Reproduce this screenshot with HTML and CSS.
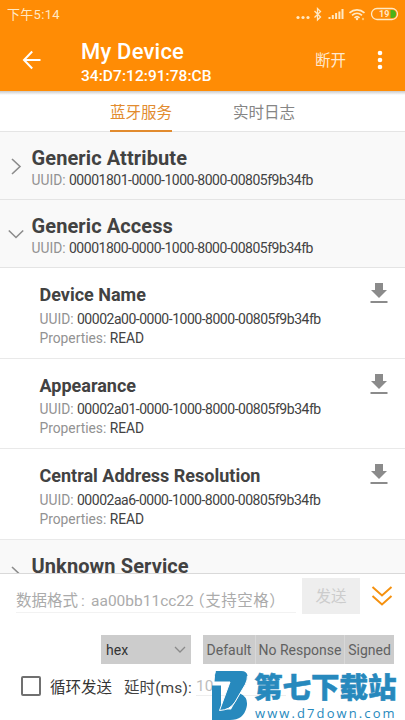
FILE: index.html
```html
<!DOCTYPE html>
<html lang="zh-CN">
<head>
<meta charset="utf-8">
<title>My Device</title>
<link rel="stylesheet" href="styles.css">
</head>
<body>
<div class="screen">
  <header class="header">
    <div class="status">
      <span class="clock">下午5:14</span>
      <svg class="status-icons" width="106" height="20" viewBox="0 0 106 20" fill="none" stroke="#ffe9c4" stroke-width="1.3">
        <g fill="#ffe9c4" stroke="none"><circle cx="3" cy="12.5" r="1.6"/><circle cx="8" cy="12.5" r="1.6"/><circle cx="13" cy="12.5" r="1.6"/></g>
        <path d="M19.5 6l6 6-3 3V3.500l3 3-6 6"/>
        <path d="M34.500 14v-2M37.800 14v-4M41.100 14V8M44.400 14V6.500M47.500 14V4" stroke-width="2"/>
        <path d="M54.500 7.800c4.500-4 10.500-4 15 0M57 10.400c3-2.700 7-2.700 10 0M59.500 12.800c1.500-1.500 3.500-1.500 5 0" stroke-width="1.7"/>
        <circle cx="62" cy="14" r="1.200" fill="#ffe9c4" stroke="none"/>
        <circle cx="68" cy="14" r="1.200" fill="#ffc56a" stroke="none"/>
        <rect x="76.500" y="3.500" width="26" height="11" rx="5.500"/>
        <path d="M95.500 5H97a4 4 0 010 8h-1.500z" fill="#4bb318" stroke="none"/>
        <text x="84" y="12.300" class="battery">19</text>
      </svg>
    </div>
    <div class="toolbar">
      <svg class="back" width="20" height="20" viewBox="0 0 20 20" fill="none" stroke="#fff" stroke-width="2"><path d="M10.200 1.500L2 10l8.200 8.500M2 10h16.500"/></svg>
      <div class="heading">
        <h1>My Device</h1>
        <p>34:D7:12:91:78:CB</p>
      </div>
      <span class="disconnect">断开</span>
      <svg class="more" width="6" height="20" viewBox="0 0 6 20" fill="#fff"><circle cx="3" cy="3" r="2.300"/><circle cx="3" cy="10" r="2.300"/><circle cx="3" cy="17" r="2.300"/></svg>
    </div>
  </header>
  <nav class="tabs">
    <span class="tab active">蓝牙服务</span>
    <span class="tab">实时日志</span>
  </nav>
  <main class="list">
    <section class="service">
      <svg class="chevron" width="16" height="18" viewBox="0 0 16 18"><path d="M4 2l8 7.500L4 17"/></svg>
      <div><h2>Generic Attribute</h2><p class="meta">UUID: <b class="uuid">00001801-0000-1000-8000-00805f9b34fb</b></p></div>
    </section>
    <section class="service">
      <svg class="chevron" width="16" height="18" viewBox="0 0 16 18"><path d="M.800 5.500L8 12.500l7.200-7"/></svg>
      <div><h2>Generic Access</h2><p class="meta">UUID: <b class="uuid">00001800-0000-1000-8000-00805f9b34fb</b></p></div>
    </section>
    <section class="item">
      <div><h3>Device Name</h3><p class="meta">UUID: <b class="uuid">00002a00-0000-1000-8000-00805f9b34fb</b></p><p class="meta">Properties: <b>READ</b></p></div>
      <svg class="download" width="18" height="22" viewBox="0 0 18 22"><path d="M5 1h8v7h4l-8 8-8-8h4zM.500 19h17v2H.500z"/></svg>
    </section>
    <section class="item">
      <div><h3>Appearance</h3><p class="meta">UUID: <b class="uuid">00002a01-0000-1000-8000-00805f9b34fb</b></p><p class="meta">Properties: <b>READ</b></p></div>
      <svg class="download" width="18" height="22" viewBox="0 0 18 22"><path d="M5 1h8v7h4l-8 8-8-8h4zM.500 19h17v2H.500z"/></svg>
    </section>
    <section class="item">
      <div><h3>Central Address Resolution</h3><p class="meta">UUID: <b class="uuid">00002aa6-0000-1000-8000-00805f9b34fb</b></p><p class="meta">Properties: <b>READ</b></p></div>
      <svg class="download" width="18" height="22" viewBox="0 0 18 22"><path d="M5 1h8v7h4l-8 8-8-8h4zM.500 19h17v2H.500z"/></svg>
    </section>
    <section class="service">
      <svg class="chevron" width="16" height="18" viewBox="0 0 16 18"><path d="M4 2l8 7.500L4 17"/></svg>
      <div><h2>Unknown Service</h2></div>
    </section>
  </main>
  <footer class="composer">
    <div class="send-row">
      <span class="input">数据格式<span class="colon">:</span>aa00bb11cc22<span class="hint">（支持空格）</span></span>
      <span class="send">发送</span>
      <svg class="expand" width="22" height="22" viewBox="0 0 22 22" fill="none" stroke="#f5910f" stroke-width="2"><path d="M1.500 2L11 10.500 20.500 2M1.500 11L11 19.500 20.500 11"/></svg>
    </div>
    <div class="mode-row">
      <span class="select">hex<svg width="12" height="8" viewBox="0 0 12 8" fill="none" stroke="#8a8a8a" stroke-width="1.300"><path d="M1 1l5 5 5-5"/></svg></span>
      <div class="modes"><span class="m1">Default</span><span class="m2">No Response</span><span class="m3">Signed</span></div>
    </div>
    <div class="loop-row">
      <i class="checkbox"></i>
      <span class="loop">循环发送</span>
      <span class="delay">延时(ms):</span>
      <span class="delay-input">10</span>
    </div>
  </footer>
  <div class="watermark">
    <svg width="36" height="49" viewBox="0 0 36 49" fill="#2789bd">
      <path d="M0 14.500h9v24h10l9-16q9 4 6.500 14-3 12.500-16.500 12.500H0z"/>
      <path d="M4 0h25q8 0 6 9-1 4-5 10l-7 12q-5 8-15.500 8.500L18 11H2q0-7 2-11z" stroke="#fff" stroke-width="1"/>
      <path d="M4 0h25q6 0 6.500 5H3z"/>
    </svg>
    <div class="brand"><strong>第七下载站</strong><span>www.d7down.com</span></div>
  </div>
</div>
</body>
</html>
```

FILE: styles.css
```css
* { box-sizing: border-box; }
body { margin: 0; font-family: Roboto, "Noto Sans CJK SC", sans-serif; color: #424242; }
h1, h2, h3, p { margin: 0; white-space: nowrap; }
svg { display: block; flex: none; }
.screen { position: relative; width: 405px; height: 720px; overflow: hidden; display: flex; flex-direction: column; background: #fff; }
.header { height: 91px; flex: none; background: #ff8c05; color: #fff; }
.status { height: 30px; display: flex; justify-content: space-between; padding: 5px 4px 0 7px; }
.clock { font-size: 13px; line-height: 20px; color: #ffe9c4; letter-spacing: .3px; }
.battery { font-size: 9px; font-weight: 700; fill: #ffe9c4; stroke: none; }
.toolbar { height: 61px; display: flex; align-items: flex-start; padding-left: 22px; }
.back { margin-top: 20px; width: 20px; }
.heading { margin-left: 39px; margin-top: 8px; width: 234px; }
h1 { font-size: 22px; font-weight: 500; line-height: 27px; letter-spacing: .2px; }
.heading p { font-size: 15.500px; font-weight: 500; line-height: 23px; letter-spacing: .05px; }
.disconnect { font-size: 15.500px; line-height: 24px; margin-top: 19px; width: 32px; color: #ffe9d0; white-space: nowrap; }
.more { margin-left: 30px; margin-top: 20px; }
.tabs { height: 41px; flex: none; display: flex; gap: 61px; padding-left: 110px; background: linear-gradient(#c9c9c9, #fff 4px); border-bottom: 1px solid #e5e5e5; }
.tab { width: 62px; height: 41px; font-size: 15.500px; line-height: 44px; color: #858585; white-space: nowrap; }
.active { color: #e28b2e; border-bottom: 2px solid #e28b2e; }
.list { height: 442px; flex: none; overflow: hidden; border-bottom: 1px solid #d9d9d9; }
.service { height: 68px; display: flex; gap: 8px; padding: 13px 0 0 7.500px; background: #f9f9f9; border-bottom: 1px solid #e4e4e4; }
.chevron { margin-top: 12px; fill: none; stroke: #8c8c8c; stroke-width: 1.600; }
h2 { font-size: 20px; font-weight: 700; line-height: 26px; letter-spacing: .1px; }
.meta { font-size: 13.800px; line-height: 19px; color: #929292; }
.meta b { font-weight: 400; color: #424242; }
.meta .uuid { font-size: 14px; letter-spacing: -.48px; }
.item { height: 90.500px; display: flex; justify-content: space-between; padding: 14px 17px 0 39.500px; border-bottom: 1px solid #e9e9e9; }
h3 { font-size: 18px; font-weight: 700; line-height: 26px; }
.item h3 + .meta { margin-top: 1.500px; }
.download { fill: #8b8b8b; }
.composer { flex: 1; display: flex; flex-direction: column; background: #fff; }
.send-row { height: 61px; display: flex; padding: 4px 0 0 16px; }
.input { width: 280px; height: 35px; font-size: 15.500px; line-height: 46px; color: #ababab; white-space: nowrap; border-bottom: 1px solid #f2f2f2; }
.colon { display: inline-block; width: 13px; padding-left: 3px; }
.hint { margin-left: -4.500px; letter-spacing: .5px; }
.send { width: 58px; height: 36px; margin-left: 6px; background: #eee; color: #ccc; font-size: 15.500px; line-height: 38px; text-align: center; }
.expand { margin: 7px 0 0 11px; }
.mode-row { height: 34px; display: flex; gap: 12px; padding-left: 101px; font-size: 14px; }
.select { width: 90px; height: 29px; display: flex; align-items: center; justify-content: space-between; padding: 0 5px; background: #ccc; color: #333; }
.modes { display: flex; height: 29px; line-height: 30px; color: #616161; }
.modes span { background: #ccc; text-align: center; white-space: nowrap; }
.m1 { width: 52px; }
.m2 { width: 89px; border-left: 1px solid #d8d8d8; }
.m3 { width: 50px; border-left: 1px solid #d8d8d8; }
.loop-row { display: flex; align-items: center; height: 34px; padding-left: 21px; font-size: 15.500px; white-space: nowrap; }
.checkbox { width: 20px; height: 20px; border: 2px solid #707070; border-radius: 2px; }
.loop { margin-left: 9px; width: 74px; color: #333; }
.delay { width: 72px; letter-spacing: .1px; }
.delay-input { color: #bdbdbd; border-bottom: 1px solid #eee; width: 90px; }
.watermark { position: absolute; left: 212px; top: 671px; display: flex; color: #2789bd; }
.brand { display: flex; flex-direction: column; margin-left: 6px; white-space: nowrap; }
.brand strong { font-size: 28.500px; line-height: 35px; font-weight: 900; -webkit-text-stroke: .5px #2789bd; }
.brand span { margin-left: 1px; font-family: "Open Sans", sans-serif; font-size: 13px; line-height: 14px; letter-spacing: 2.100px; font-weight: 500; }
```
